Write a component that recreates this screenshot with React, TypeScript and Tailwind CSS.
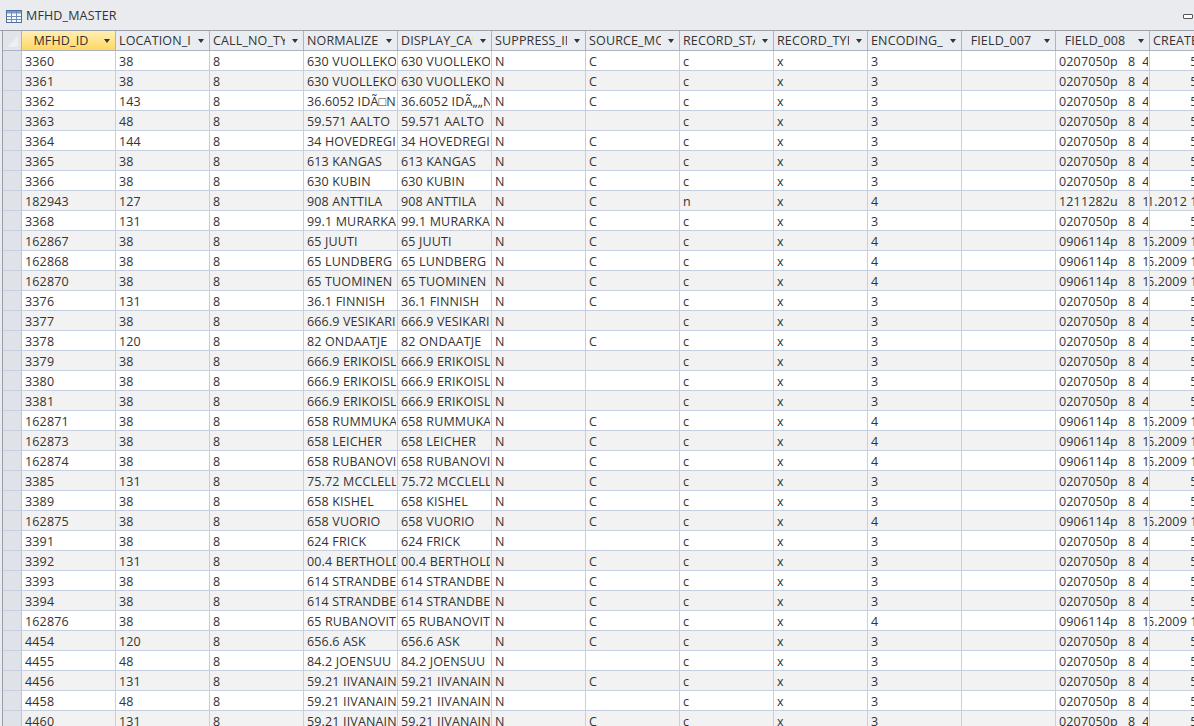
type Row = [string, string, string, string, string, string, string?];

const rows: Row[] = [
  ["3360", "38", "630 VUOLLEKOSKI", "630 VUOLLEKOSKI", "C", "c", "3"],
  ["3361", "38", "630 VUOLLEKOSKI", "630 VUOLLEKOSKI", "C", "c", "3"],
  ["3362", "143", "36.6052 IDÃ\u25a1NTAUSTA", "36.6052 IDÃ„„NTAUSTA", "C", "c", "3"],
  ["3363", "48", "59.571 AALTO", "59.571 AALTO", "", "c", "3"],
  ["3364", "144", "34 HOVEDREGISTER", "34 HOVEDREGISTER", "C", "c", "3"],
  ["3365", "38", "613 KANGAS", "613 KANGAS", "C", "c", "3"],
  ["3366", "38", "630 KUBIN", "630 KUBIN", "C", "c", "3"],
  ["182943", "127", "908 ANTTILA", "908 ANTTILA", "C", "n", "4"],
  ["3368", "131", "99.1 MURARKA", "99.1 MURARKA", "C", "c", "3"],
  ["162867", "38", "65 JUUTI", "65 JUUTI", "C", "c", "4"],
  ["162868", "38", "65 LUNDBERG", "65 LUNDBERG", "C", "c", "4"],
  ["162870", "38", "65 TUOMINEN", "65 TUOMINEN", "C", "c", "4"],
  ["3376", "131", "36.1 FINNISH", "36.1 FINNISH", "C", "c", "3"],
  ["3377", "38", "666.9 VESIKARI", "666.9 VESIKARI", "", "c", "3"],
  ["3378", "120", "82 ONDAATJE", "82 ONDAATJE", "C", "c", "3"],
  ["3379", "38", "666.9 ERIKOISLEHTI", "666.9 ERIKOISLEHTI", "", "c", "3"],
  ["3380", "38", "666.9 ERIKOISLEHTI", "666.9 ERIKOISLEHTI", "", "c", "3"],
  ["3381", "38", "666.9 ERIKOISLEHTI", "666.9 ERIKOISLEHTI", "", "c", "3"],
  ["162871", "38", "658 RUMMUKAINEN", "658 RUMMUKAINEN", "C", "c", "4"],
  ["162873", "38", "658 LEICHER", "658 LEICHER", "C", "c", "4"],
  ["162874", "38", "658 RUBANOVITSJ", "658 RUBANOVITSJ", "C", "c", "4"],
  ["3385", "131", "75.72 MCCLELLAN", "75.72 MCCLELLAN", "C", "c", "3"],
  ["3389", "38", "658 KISHEL", "658 KISHEL", "C", "c", "3"],
  ["162875", "38", "658 VUORIO", "658 VUORIO", "C", "c", "4"],
  ["3391", "38", "624 FRICK", "624 FRICK", "", "c", "3"],
  ["3392", "131", "00.4 BERTHOLD", "00.4 BERTHOLD", "C", "c", "3"],
  ["3393", "38", "614 STRANDBERG", "614 STRANDBERG", "C", "c", "3"],
  ["3394", "38", "614 STRANDBERG", "614 STRANDBERG", "C", "c", "3"],
  ["162876", "38", "65 RUBANOVITSJ", "65 RUBANOVITSJ", "C", "c", "4"],
  ["4454", "120", "656.6 ASK", "656.6 ASK", "C", "c", "3"],
  ["4455", "48", "84.2 JOENSUU", "84.2 JOENSUU", "", "c", "3"],
  ["4456", "131", "59.21 IIVANAINEN", "59.21 IIVANAINEN", "C", "c", "3"],
  ["4458", "48", "59.21 IIVANAINEN", "59.21 IIVANAINEN", "", "c", "3"],
  ["4460", "131", "59.21 IIVANAINEN", "59.21 IIVANAINEN", "C", "c", "3"],
];

const headers = [
  { label: "MFHD_ID", center: true, active: true },
  { label: "LOCATION_ID" },
  { label: "CALL_NO_TYPE" },
  { label: "NORMALIZED" },
  { label: "DISPLAY_CALL" },
  { label: "SUPPRESS_IN" },
  { label: "SOURCE_MOD" },
  { label: "RECORD_STAT" },
  { label: "RECORD_TYPE" },
  { label: "ENCODING_L" },
  { label: "FIELD_007", center: true },
  { label: "FIELD_008", center: true },
];

function TableIcon() {
  return (
    <svg width="16" height="13" viewBox="0 0 16 13" className="shrink-0">
      <rect x="0.5" y="0.5" width="15" height="12" fill="#f4f7fb" stroke="#4f6f9f" />
      <rect x="1" y="1" width="14" height="2.5" fill="#7d9cc9" />
      <path d="M1 6.5h14M1 9.5h14M5.5 1v11M10.5 1v11" stroke="#6f8db8" strokeWidth="1" />
    </svg>
  );
}

function Cell({ children }: { children?: React.ReactNode }) {
  return (
    <div className="h-full w-[94px] shrink-0 border-r border-[#c6cfdf] pl-[3px] pr-[1px] pt-[1px]">
      <div className="overflow-hidden whitespace-pre leading-[20px]">{children}</div>
    </div>
  );
}

function Header({ label, center, active }: { label: string; center?: boolean; active?: boolean }) {
  return (
    <div
      className={`flex h-full w-[94px] shrink-0 items-center border-r border-[#aeb4bd] pl-[3px] pt-[1px] ${
        active ? "bg-gradient-to-b from-[#ffeeb5] to-[#ffd75e]" : "bg-[#e9ecf0]"
      }`}
    >
      <div className={`min-w-0 flex-1 overflow-hidden whitespace-nowrap ${center ? "text-center" : ""}`}>{label}</div>
      <div className="ml-[7px] mr-[5px] h-0 w-0 shrink-0 border-x-[3.5px] border-t-[4px] border-x-transparent border-t-[#333333]" />
    </div>
  );
}

export default function App() {
  return (
    <div className="h-[726px] w-[1194px] overflow-hidden bg-[#e9ebef] font-['Open_Sans',sans-serif] text-[12.5px] tracking-[0.15px] text-[#333333]">
      <div className="flex h-[31px] items-center border-b border-[#9aa0a8] pl-[6px] pt-[3px]">
        <TableIcon />
        <span className="ml-[4px]">MFHD_MASTER</span>
        <div className="ml-auto mr-[1px] h-[5px] w-[10px] rounded-[1px] border border-[#555555] bg-white" />
      </div>
      <div className="ml-[2px] w-[1300px] border-l border-[#9aa0a8]">
        <div className="flex h-[20px] border-b border-[#aeb4bd]">
          <div className="relative h-full w-[19px] shrink-0 border-r border-[#aeb4bd] bg-[#e1e5ea]">
            <div className="absolute bottom-[3px] right-[3px] h-0 w-0 border-b-[11px] border-l-[11px] border-b-[#edf0f3] border-l-transparent" />
          </div>
          {headers.map((h) => (
            <Header key={h.label} {...h} />
          ))}
          <Header label="CREATE_DATE" />
        </div>
        {rows.map((r, i) => {
          const isNew = r[0].length === 6;
          const f008 = isNew
            ? r[0] === "182943"
              ? "1211282u   8  1"
              : "0906114p   8  1"
            : "0207050p   8  4";
          const created = isNew ? (r[0] === "182943" ? "21.11.2012 13:20:14" : "16.5.2009 12:41:07") : "5.7.2002";
          return (
            <div key={r[0]} className="flex h-[20px] border-b border-[#c6cfdf]">
              <div className="h-full w-[19px] shrink-0 border-r border-[#c0c6cf] bg-[#dfe3e9]" />
              <div className={`flex h-full ${i % 2 === 0 ? "bg-white" : "bg-[#f2f2f2]"}`}>
                <Cell>{r[0]}</Cell>
                <Cell>{r[1]}</Cell>
                <Cell>8</Cell>
                <Cell>{r[2]}</Cell>
                <Cell>{r[3]}</Cell>
                <Cell>N</Cell>
                <Cell>{r[4]}</Cell>
                <Cell>{r[5]}</Cell>
                <Cell>x</Cell>
                <Cell>{r[6]}</Cell>
                <Cell />
                <Cell>{f008}</Cell>
                <div className="flex h-full w-[94px] shrink-0 justify-end overflow-hidden whitespace-nowrap pr-[3px] pt-[1px] leading-[20px]">
                  {created}
                </div>
              </div>
            </div>
          );
        })}
      </div>
    </div>
  );
}
